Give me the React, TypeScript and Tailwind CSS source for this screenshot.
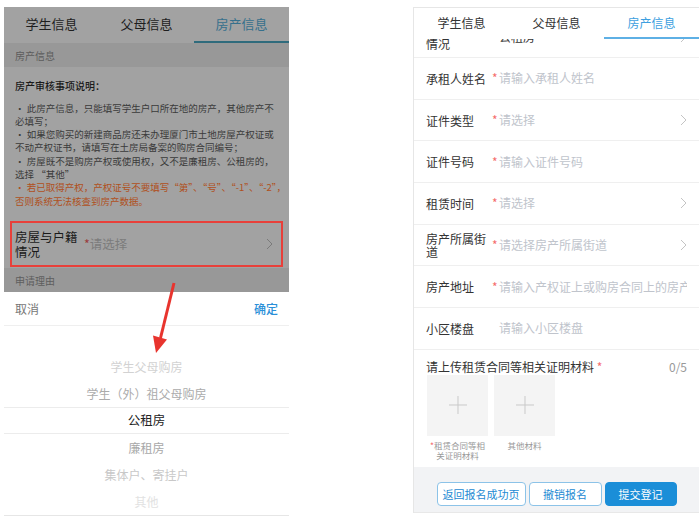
import React from "react";

const tabs = ["学生信息", "父母信息", "房产信息"];

function Chevron({ className }: { className?: string }) {
  return (
    <svg width="7" height="12" viewBox="0 0 7 12" className={className}>
      <path d="M1 1l5 5-5 5" fill="none" stroke="currentColor" strokeWidth="1" />
    </svg>
  );
}

function Plus() {
  return (
    <svg width="20" height="20" viewBox="0 0 20 20">
      <path d="M10 1v18M1 10h18" stroke="#c9c9c9" strokeWidth="1" fill="none" />
    </svg>
  );
}

const notes: { text: string; warn?: boolean }[] = [
  { text: "• 此房产信息，只能填写学生户口所在地的房产，其他房产不" },
  { text: "必填写；" },
  { text: "• 如果您购买的新建商品房还未办理厦门市土地房屋产权证或" },
  { text: "不动产权证书，请填写在土房局备案的购房合同编号；" },
  { text: "• 房屋既不是购房产权或使用权，又不是廉租房、公租房的，" },
  { text: "选择 “其他”" },
  { text: "• 若已取得产权，产权证号不要填写“第”、“号”、“-1”、“-2”，", warn: true },
  { text: "否则系统无法核查到房产数据。", warn: true },
];

const pickerItems: { text: string; cls: string; selected?: boolean }[] = [
  { text: "", cls: "" },
  { text: "学生父母购房", cls: "text-[#d2d2d2]" },
  { text: "学生（外）祖父母购房", cls: "text-[#ababab]" },
  { text: "公租房", cls: "text-[#222]", selected: true },
  { text: "廉租房", cls: "text-[#a8a8a8]" },
  { text: "集体户、寄挂户", cls: "text-[#c8c8c8]" },
  { text: "其他", cls: "text-[#e2e2e2]" },
];

function LeftPanel() {
  return (
    <div className="ml-[4px] mt-[7px] w-[285px] flex flex-col shrink-0">
      {/* dimmed form behind the picker */}
      <div className="h-[36px] flex bg-[#a2a2a2]">
        {tabs.map((t, i) => (
          <div
            key={t}
            className={
              i === 2
                ? "flex-1 flex items-center justify-center text-[13px] text-[#36708c] border-b-2 border-[#2f6b7c]"
                : "flex-1 flex items-center justify-center text-[13px] text-[#1e1e1e] border-b-2 border-transparent"
            }
          >
            {t}
          </div>
        ))}
      </div>
      <div className="h-[24px] bg-[#989898] px-[11px] flex items-center text-[10px] text-[#5c5c5c]">
        房产信息
      </div>
      <div className="h-[148px] bg-[#a2a2a2] px-[11px] pt-[12px]">
        <div className="text-[10px] leading-[14px] font-medium text-[#1a1a1a]">房产审核事项说明：</div>
        <div className="mt-[8.5px]">
          {notes.map((n) => (
            <div
              key={n.text}
              className={
                n.warn
                  ? "whitespace-nowrap text-[9.5px] leading-[13.3px] text-[#b0501c]"
                  : "whitespace-nowrap text-[9.5px] leading-[13.3px] text-[#3a3a3a]"
              }
            >
              {n.text}
            </div>
          ))}
        </div>
      </div>
      <div className="h-[53px] bg-[#a2a2a2] pt-[6px] px-[6px]">
        <div className="h-[46px] border-2 border-[#e8403a] flex items-center pl-[3px] pr-[8px]">
          <div className="w-[66px] shrink-0 text-[12.5px] leading-[15px] text-[#1a1a1a]">房屋与户籍情况</div>
          <div className="ml-[3px] flex-1 text-[12.5px] text-[#7c7c7c]">
            <span className="text-[#9a3b3b]">*</span>请选择
          </div>
          <Chevron className="text-[#7a7a7a]" />
        </div>
      </div>
      <div className="h-[24px] bg-[#989898] px-[11px] flex items-center text-[10px] text-[#5e5e5e]">
        申请理由
      </div>

      {/* picker sheet */}
      <div className="bg-white">
        <div className="h-[34px] px-[11px] flex items-center justify-between border-b border-[#efefef] text-[12px]">
          <span className="text-[#777]">取消</span>
          <span className="text-[#2a8fd8] font-medium">确定</span>
        </div>
        <div className="border-b border-[#e6e6e6]">
          {pickerItems.map((p, i) => (
            <div
              key={i}
              className={
                p.selected
                  ? "h-[27px] flex items-center justify-center text-[12.5px] border-y border-[#ececec] " + p.cls
                  : "h-[27px] flex items-center justify-center text-[12px] " + p.cls
              }
            >
              {p.text}
            </div>
          ))}
        </div>
      </div>
    </div>
  );
}

type RowProps = {
  label: string;
  placeholder: string;
  required?: boolean;
  arrow?: boolean;
};

function Row({ label, placeholder, required = true, arrow }: RowProps) {
  return (
    <div className="h-[41.7px] flex items-center border-b border-[#efefef] pl-[12px] pr-[12px]">
      <div className="w-[66px] shrink-0 text-[12px] leading-[13px] text-[#333]">{label}</div>
      <div className="flex-1 min-w-0 flex whitespace-nowrap overflow-hidden text-[12px] text-[#c0c4cc]">
        <span className="w-[7px] shrink-0 text-[#f56c6c]">{required ? "*" : ""}</span>
        <span>{placeholder}</span>
      </div>
      {arrow && <Chevron className="text-[#c4c4c4] ml-[4px] shrink-0" />}
    </div>
  );
}

function RightPanel() {
  return (
    <div className="ml-[124px] mt-[7px] w-[286px] shrink-0 border-l border-t border-[#e6e6e6] flex flex-col bg-white">
      <div className="h-[31px] flex bg-white">
        {tabs.map((t, i) => (
          <div
            key={t}
            className={
              i === 2
                ? "flex-1 flex items-center justify-center text-[12px] text-[#3d9fe0] border-b-2 border-[#5eb0e5]"
                : "flex-1 flex items-center justify-center text-[12px] text-[#333] border-b-2 border-transparent"
            }
          >
            {t}
          </div>
        ))}
      </div>
      {/* row scrolled partly under the tab bar */}
      <div className="h-[19px] overflow-hidden border-b border-[#efefef]">
        <div className="mt-[-22.7px] h-[41.7px] flex items-center pl-[12px] pr-[12px]">
          <div className="w-[66px] shrink-0 text-[12px] leading-[14px] text-[#333]">房屋与户籍情况</div>
          <div className="flex-1 text-[12px] text-[#333] pl-[7px]">公租房</div>
          <Chevron className="text-[#c4c4c4]" />
        </div>
      </div>
      <Row label="承租人姓名" placeholder="请输入承租人姓名" />
      <Row label="证件类型" placeholder="请选择" arrow />
      <Row label="证件号码" placeholder="请输入证件号码" />
      <Row label="租赁时间" placeholder="请选择" arrow />
      <Row label="房产所属街道" placeholder="请选择房产所属街道" arrow />
      <Row label="房产地址" placeholder="请输入产权证上或购房合同上的房产地址" />
      <Row label="小区楼盘" placeholder="请输入小区楼盘" required={false} />

      <div className="h-[117px] pl-[12px] pr-[12px] pt-[10px]">
        <div className="flex justify-between text-[12px] leading-[14px]">
          <span className="text-[#333]">
            请上传租赁合同等相关证明材料 <span className="text-[#f56c6c]">*</span>
          </span>
          <span className="text-[#999]">0/5</span>
        </div>
        <div className="mt-[1px] ml-[1px] flex gap-[6px]">
          <div className="w-[61px] flex flex-col items-center">
            <div className="w-[61px] h-[61px] bg-[#f4f4f4] flex items-center justify-center">
              <Plus />
            </div>
            <div className="mt-[4px] text-[8.5px] leading-[10.5px] text-[#999] text-center whitespace-nowrap">
              <span className="text-[#f56c6c]">*</span>租赁合同等相
              <br />
              关证明材料
            </div>
          </div>
          <div className="w-[61px] flex flex-col items-center">
            <div className="w-[61px] h-[61px] bg-[#f4f4f4] flex items-center justify-center">
              <Plus />
            </div>
            <div className="mt-[4px] text-[8.5px] leading-[10.5px] text-[#999] text-center whitespace-nowrap">
              其他材料
            </div>
          </div>
        </div>
      </div>

      <div className="h-[46px] bg-[#f2f3f5] border-b border-[#e8e8e8] flex justify-center gap-[3px] pt-[15px]">
        <button className="w-[89px] h-[24px] rounded-[4px] border border-[#8cc3e8] bg-white text-[11px] text-[#1d8ad3]">
          返回报名成功页
        </button>
        <button className="w-[73px] h-[24px] rounded-[4px] border border-[#8cc3e8] bg-white text-[11px] text-[#1d8ad3]">
          撤销报名
        </button>
        <button className="w-[72px] h-[24px] rounded-[4px] border border-[#1b8ed8] bg-[#1b8ed8] text-[11px] text-white">
          提交登记
        </button>
      </div>
    </div>
  );
}

export default function App() {
  return (
    <div className="relative w-[699px] h-[519px] bg-white overflow-hidden flex items-start font-['Noto_Sans_CJK_SC','Noto_Sans',sans-serif]">
      <LeftPanel />
      <RightPanel />
      {/* red pointer from the highlighted row to the picker */}
      <svg className="absolute left-0 top-0 pointer-events-none" width="699" height="519" viewBox="0 0 699 519">
        <line x1="174" y1="283" x2="160.5" y2="338" stroke="#e8342e" strokeWidth="3" />
        <polygon points="156,353 167,339.5 153,335.5" fill="#e8342e" />
      </svg>
    </div>
  );
}
